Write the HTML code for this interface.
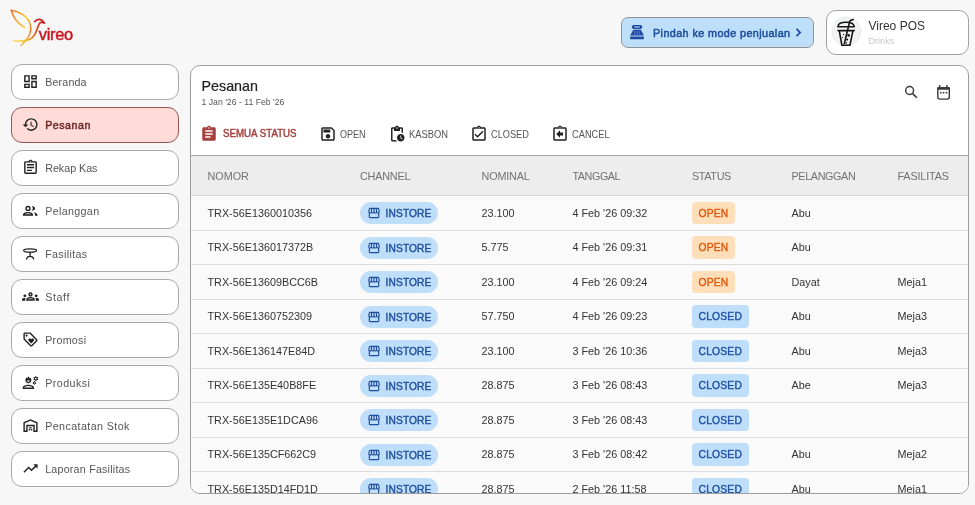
<!DOCTYPE html>
<html><head><meta charset="utf-8">
<style>
*{box-sizing:border-box;margin:0;padding:0}
html,body{-webkit-font-smoothing:antialiased;width:975px;height:505px;overflow:hidden;background:#f7f7f7;font-family:"Liberation Sans",sans-serif;color:#333}
.a{position:absolute}
.t{position:absolute;white-space:nowrap;line-height:1}
svg{position:absolute;display:block}
.nav{position:absolute;left:11px;width:168px;height:36px;border:1px solid #a9a9a9;border-radius:11px;background:#fff}
.nav.act{background:#ffdcd7;border-color:#955656}
.nl{position:absolute;left:33.2px;top:11.8px;font-size:10.7px;color:#555;line-height:1;white-space:nowrap}
.nav.act .nl{color:#6b2727;font-size:10.7px;-webkit-text-stroke:0.45px #6b2727}
.ni{left:9.8px;top:8.2px;width:17px;height:17px}
.card{position:absolute;left:190px;top:65px;width:779px;height:429px;border:1px solid #9d9d9d;border-radius:10px;background:#fff;overflow:hidden}
.hdr{position:absolute;left:0;top:89px;width:777px;height:41px;background:#ededed;border-top:1px solid #a4a4a4;border-bottom:1px solid #d6d6d6}
.th{position:absolute;top:15.3px;font-size:10.8px;color:#727272;line-height:1;white-space:nowrap}
.row{position:absolute;left:0;width:777px;height:34.5px;background:#fafafa;border-bottom:1px solid #dcdcdc}
.td{position:absolute;top:11.9px;font-size:10.8px;color:#333;line-height:1;white-space:nowrap}
.chip{position:absolute;left:169px;top:6px;width:78px;height:22px;border-radius:11px;background:#bedef9}
.chip .cl{position:absolute;left:25.6px;top:7.2px;letter-spacing:0.1px;font-size:10.2px;color:#1f4f9e;line-height:1;-webkit-text-stroke:0.4px #1f4f9e}
.chip svg{left:7px;top:4px;width:14px;height:14px}
.st{position:absolute;left:500.5px;top:5.6px;height:22.5px;border-radius:4px;font-size:10.3px;letter-spacing:0.2px;line-height:1;padding:7.4px 7px 0 7px;white-space:nowrap;-webkit-text-stroke:0.35px currentColor}
.st.o{background:#ffdfb9;color:#e2560c}
.st.c{background:#bedef9;color:#1d4fa3}
.tab{position:absolute;top:59px;height:18px}
.tab svg{left:0;top:0;width:18px;height:18px}
.tab .tl{position:absolute;left:20px;top:4.5px;font-size:10px;color:#555;line-height:1;white-space:nowrap}
</style></head><body><div id="root" style="position:absolute;left:0;top:0;width:975px;height:505px;will-change:transform">

<!-- logo -->
<svg class="a" style="left:0;top:0" width="90" height="55" viewBox="0 0 90 55">
<defs>
<linearGradient id="lg1" gradientUnits="userSpaceOnUse" x1="11" y1="10" x2="24" y2="46">
<stop offset="0" stop-color="#f06a22"/><stop offset="0.32" stop-color="#f7d21e"/><stop offset="0.68" stop-color="#e6701e"/><stop offset="1" stop-color="#f3c23a"/>
</linearGradient>
<linearGradient id="lg3" gradientUnits="userSpaceOnUse" x1="11" y1="10" x2="24" y2="28">
<stop offset="0" stop-color="#f06a22"/><stop offset="1" stop-color="#f7c21e"/>
</linearGradient>
<linearGradient id="lg2" gradientUnits="userSpaceOnUse" x1="13" y1="41" x2="42" y2="22">
<stop offset="0" stop-color="#fbe28a"/><stop offset="0.3" stop-color="#f5c52a"/><stop offset="0.6" stop-color="#e8651c"/><stop offset="1" stop-color="#c81e22"/>
</linearGradient>
</defs>
<path d="M11.2 10.3 C19 11.5 28 16 30.3 24.5 C31.8 31 29 37 25.5 40.8 C24 42.6 22.5 44.3 21 45.5" fill="none" stroke="url(#lg1)" stroke-width="1.45" stroke-linecap="round"/>
<path d="M11.2 10.3 C13 17 17 23 24.5 27.5" fill="none" stroke="url(#lg3)" stroke-width="1.35" stroke-linecap="round"/>
<path d="M13.5 40.6 C20 41.6 27 41 31.5 38.3 C35 35.8 36.6 31 37.6 27.8 C38.5 24.8 39.6 22.6 41.2 22.2 L44.2 23" fill="none" stroke="url(#lg2)" stroke-width="1.7" stroke-linecap="round"/>
<path d="M34.8 21.6 C36 20 37.5 19.2 39.5 19.4 C41.5 19.6 43 21 44.2 22.8" fill="none" stroke="#c81e22" stroke-width="1.7" stroke-linecap="round"/>
</svg>
<div class="t" style="left:38.8px;top:25.6px;font-size:16.4px;letter-spacing:-0.3px;color:#c8161f;-webkit-text-stroke:0.45px #c8161f">vireo</div>

<!-- top right button -->
<div class="a" style="left:621px;top:16.5px;width:193px;height:31px;border:1px solid #939393;border-radius:7px;background:#bedff9"></div>
<svg style="left:624px;top:20px;width:26px;height:24px" viewBox="0 0 26 24">
<path fill="#1f4aa0" fill-rule="evenodd" d="M9.8 5H16.3A2 2 0 0 1 18.3 7A2 2 0 0 1 16.3 9H9.8A2 2 0 0 1 7.8 7A2 2 0 0 1 9.8 5ZM10.1 6.5V7.6H16V6.5Z"/>
<path fill="#1f4aa0" d="M9.3 9.8H16.9L19.8 15.6H6.2Z"/>
<path fill="#5f86c8" d="M10.2 11h1v3.7h-1zM12.9 11h.9v3.7h-.9zM15.2 11h.7v3.7h-.7z"/>
<rect x="6.1" y="15.6" width="13.8" height="1.4" fill="#7397d2"/>
<rect x="6" y="17" width="14" height="2.3" rx="0.8" fill="#1f4aa0"/>
</svg>
<div class="t" style="left:653px;top:27.5px;font-size:10.8px;letter-spacing:0.4px;color:#1f4f9e;-webkit-text-stroke:0.5px #1f4f9e">Pindah ke mode penjualan</div>
<svg style="left:790px;top:23.6px;width:17px;height:17px" viewBox="0 0 24 24"><path fill="#1f4aa0" d="M10 6L8.3 7.7 12.6 12l-4.3 4.3L10 18l6-6z"/></svg>

<!-- store card -->
<div class="a" style="left:825.5px;top:10px;width:143px;height:44.5px;border:1px solid #a0a0a0;border-radius:10px;background:#fff"></div>
<svg style="left:826px;top:12px;width:40px;height:40px" viewBox="0 0 40 40">
<circle cx="20.4" cy="19.4" r="14.4" fill="#f3f3f3" stroke="#dae6da" stroke-width="0.7"/>
<g fill="none" stroke="#151515" stroke-width="1.6" stroke-linejoin="round" stroke-linecap="round">
<path d="M12 14.7C12 11.6 15 10.3 20 10.3S28 11.6 28.2 14.7M11.8 14.7H28.3M12 18.6H28.2M13.3 18.8L15.9 33.3H23.9L26.9 18.8"/>
<path d="M18.3 31.6L23.9 8.8L27.2 7.6"/>
</g>
<g fill="#151515"><circle cx="22.6" cy="23.4" r="1.3"/><circle cx="21.1" cy="27.6" r="1.05"/><circle cx="20.2" cy="30.9" r="0.8"/><circle cx="17.5" cy="22.6" r="0.7"/><circle cx="16.5" cy="25.5" r="0.6"/></g>
</svg>
<div class="t" style="left:868.5px;top:20px;font-size:12px;color:#333">Vireo POS</div>
<div class="t" style="left:868.5px;top:36.7px;font-size:9.1px;color:#c9c9c9">Drinks</div>

<!-- sidebar -->
<div class="nav" style="top:64px"><svg class="ni" viewBox="0 0 24 24"><path fill="#222" d="M19 5v2h-4V5h4M9 5v6H5V5h4m10 8v6h-4v-6h4M9 17v2H5v-2h4M21 3h-8v6h8V3zM11 3H3v10h8V3zm10 8h-8v10h8V11zm-10 4H3v6h8v-6z"/></svg><div class="nl" style="letter-spacing:0.16px">Beranda</div></div>
<div class="nav act" style="top:107px"><svg class="ni" viewBox="0 0 24 24"><path fill="#222" d="M13 3c-4.97 0-9 4.03-9 9H1l3.89 3.89.07.14L9 12H6c0-3.870 3.13-7 7-7s7 3.13 7 7-3.13 7-7 7c-1.93 0-3.68-.79-4.94-2.06l-1.42 1.42C8.27 19.99 10.51 21 13 21c4.97 0 9-4.030 9-9s-4.03-9-9-9zm-1 5v5l4.28 2.54.72-1.21-3.5-2.080V8H12z"/></svg><div class="nl" style="letter-spacing:0.5px">Pesanan</div></div>
<div class="nav" style="top:150px"><svg class="ni" viewBox="0 0 24 24"><path fill="#222" d="M7 15h7v2H7zm0-4h10v2H7zm0-4h10v2H7zm12-4h-4.18C14.4 1.84 13.3 1 12 1c-1.3 0-2.4.84-2.82 2H5c-1.1 0-2 .9-2 2v14c0 1.1.9 2 2 2h14c1.1 0 2-.9 2-2V5c0-1.1-.9-2-2-2zm-7-.25c.41 0 .75.34.75.75s-.34.75-.75.75-.75-.34-.75-.75.34-.75.75-.75zM19 19H5V5h14v14z"/></svg><div class="nl" style="letter-spacing:0px">Rekap Kas</div></div>
<div class="nav" style="top:193px"><svg style="left:6px;top:6px;width:24px;height:24px" viewBox="0 0 24 24"><g fill="none" stroke="#1a1a1a" stroke-width="1.35"><circle cx="10" cy="8.4" r="1.95"/><path d="M5.4 15C5.8 13.5 7.6 12.6 10 12.6S14.2 13.5 14.6 15Z" stroke-linejoin="round"/></g><path fill="#1a1a1a" d="M13.4 5.9C15.6 5.9 17.1 7 17.1 8.3S15.6 10.7 13.4 10.7C14.4 10 14.9 9.2 14.9 8.3S14.4 6.6 13.4 5.9Z M16 12.3C18.1 12.8 19.5 14 19.6 15.7H17.2C17.1 14.3 16.7 13.2 16 12.3Z"/></svg><div class="nl" style="letter-spacing:0.35px">Pelanggan</div></div>
<div class="nav" style="top:236px"><svg style="left:6px;top:6px;width:24px;height:24px" viewBox="0 0 24 24"><g fill="none" stroke="#1a1a1a" stroke-width="1.3"><ellipse cx="12.1" cy="7.5" rx="6.45" ry="1.7"/><path d="M12.1 9.2V13.3M8.6 16.5C8.6 14.5 10.1 13.3 12.1 13.3S15.6 14.5 15.6 16.5"/></g></svg><div class="nl" style="letter-spacing:0.35px">Fasilitas</div></div>
<div class="nav" style="top:279px"><svg class="ni" viewBox="0 0 24 24"><path fill="#222" d="M4,13c1.1,0,2-0.9,2-2c0-1.1-0.9-2-2-2s-2,0.9-2,2C2,12.1,2.9,13,4,13z M5.13,14.1C4.76,14.04,4.39,14,4,14 c-0.99,0-1.93,0.21-2.78,0.58C0.48,14.9,0,15.62,0,16.43V18l4.5,0v-1.61C4.5,15.560,4.73,14.78,5.13,14.1z M20,13c1.1,0,2-0.9,2-2 c0-1.1-0.9-2-2-2s-2,0.9-2,2C18,12.1,18.9,13,20,13z M24,16.43c0-0.81-0.48-1.53-1.22-1.85C21.93,14.21,20.99,14,20,14 c-0.39,0-0.76,0.04-1.13,0.1c0.4,0.68,0.63,1.46,0.63,2.29V18l4.5,0V16.43z M16.24,13.65c-1.17-0.52-2.61-0.9-4.24-0.9 c-1.63,0-3.07,0.39-4.24,0.9C6.68,14.13,6,15.21,6,16.39V18h12v-1.61C18,15.21,17.32,14.13,16.24,13.65z M8.07,16 c0.09-0.23,0.13-0.39,0.91-0.69c0.97-0.38,1.99-0.56,3.02-0.56s2.05,0.18,3.02,0.56c0.77,0.3,0.81,0.46,0.91,0.69H8.07z M12,8 c0.55,0,1,0.45,1,1s-0.45,1-1,1s-1-0.45-1-1S11.45,8,12,8 M12,6c-1.66,0-3,1.34-3,3c0,1.66,1.34,3,3,3s3-1.34,3-3 C15,7.34,13.66,6,12,6L12,6z"/></svg><div class="nl" style="letter-spacing:0.6px">Staff</div></div>
<div class="nav" style="top:322px"><svg class="ni" viewBox="0 0 24 24"><path fill="#222" d="M21.41 11.58l-9-9C12.05 2.22 11.55 2 11 2H4c-1.1 0-2 .9-2 2v7c0 .55.22 1.05.59 1.42l9 9c.36.36.86.58 1.41.58s1.05-.22 1.41-.59l7-7c.37-.36.59-.86.59-1.41s-.23-1.06-.59-1.42zM13 20.01L4 11V4h7v-.01l9 9-7 7.02zM6.5 5A1.5 1.5 0 1 0 6.5 8A1.5 1.5 0 1 0 6.5 5zM8.9 12.55c0 .57.23 1.07.6 1.45l3.5 3.5 3.5-3.5c.37-.37.6-.89.6-1.45 0-1.13-.92-2.05-2.05-2.05-.57 0-1.08.23-1.450.6l-.6.6-.6-.59c-.37-.38-.89-.61-1.45-.61-1.13 0-2.05.92-2.05 2.05z"/></svg><div class="nl" style="letter-spacing:0.28px">Promosi</div></div>
<div class="nav" style="top:365px"><svg class="ni" viewBox="0 0 24 24"><path fill="#222" d="M9 15c-2.67 0-8 1.34-8 4v2h16v-2c0-2.66-5.33-4-8-4zm-6 4c.22-.72 3.31-2 6-2 2.7 0 5.8 1.29 6 2H3zM4.74 9H5c0 2.21 1.79 4 4 4s4-1.79 4-4h.26c.27 0 .49-.22.49-.49v-.02c0-.27-.22-.49-.49-.49H13c0-1.48-.81-2.75-2-3.45v.95c0 .28-.22.5-.5.5s-.5-.22-.5-.5V4.14C9.68 4.06 9.35 4 9 4s-.68.06-1 .14V5.5c0 .28-.22.5-.5.5S7 5.78 7 5.5v-.95C5.81 5.25 5 6.52 5 8h-.26c-.27 0-.49.22-.49.49v.03c0 .26.22.48.49.48zM11 9c0 1.1-.9 2-2 2s-2-.9-2-2h4zM21.98 6.23l.93-.83-.75-1.3-1.19.39c-.14-.11-.3-.2-.47-.27L20.25 3h-1.5l-.25 1.22c-.17.07-.33.16-.48.27l-1.18-.39-.75 1.3.93.83c-.02.17-.02.35 0 .52l-.93.85.75 1.3 1.2-.38c.13.1.28.18.43.25l.28 1.23h1.5l.27-1.22c.16-.07.3-.15.44-.25l1.19.38.75-1.3-.93-.85c.03-.19.02-.36.01-.53zM19.5 7.75c-.69 0-1.25-.56-1.25-1.25s.56-1.25 1.25-1.25 1.25.56 1.25 1.25-.56 1.25-1.250 1.25zM19.4 10.79l-.85.28c-.1-.08-.21-.14-.33-.19l-.18-.88h-1.07l-.18.87c-.12.05-.24.12-.34.19l-.84-.28-.54.93.66.59c-.01.13-.01.25 0 .37l-.66.61.54.93.86-.27c.1.07.2.13.31.18l.18.88h1.07l.19-.87c.11-.05.22-.11.32-.18l.85.27.54-.93-.66-.61c.01-.13.01-.25 0-.37l.66-.59-.53-.93zM17.75 13.3c-.48 0-.87-.39-.87-.87s.39-.87.87-.87.87.39.87.87-.39.87-.87.87z"/></svg><div class="nl" style="letter-spacing:0.44px">Produksi</div></div>
<div class="nav" style="top:408px"><svg class="ni" viewBox="0 0 24 24"><path fill="#222" fill-rule="evenodd" d="M2 21V7.5L12 3.2 22 7.5V21h-6v-8H8v8zM4 19h2v-8h12v8h2V8.8L12 5.4 4 8.8zM9.5 17h2v2h-2zM12.5 17h2v2h-2zM10 14.5h3.5v1.7H10z"/></svg><div class="nl" style="letter-spacing:0.41px">Pencatatan Stok</div></div>
<div class="nav" style="top:451px"><svg class="ni" viewBox="0 0 24 24"><path fill="#222" d="M16 6l2.29 2.29-4.88 4.88-4-4L2 16.59 3.41 18l6-6 4 4 6.3-6.29L22 12V6z"/></svg><div class="nl" style="letter-spacing:0.22px">Laporan Fasilitas</div></div>

<!-- main card -->
<div class="card">
  <div class="t" style="left:10.5px;top:13px;font-size:14.3px;color:#222;-webkit-text-stroke:0.2px #222">Pesanan</div>
  <div class="t" style="left:10.5px;top:32px;font-size:8.7px;color:#555">1 Jan '26 - 11 Feb '26</div>
  <svg style="left:709px;top:14px;width:25px;height:25px" viewBox="0 0 25 25"><g fill="none" stroke="#3a3a3a" stroke-width="1.45"><circle cx="9.6" cy="10.5" r="3.95"/><path d="M12.4 13.4L16.8 17.8" stroke-width="1.6"/></g></svg>
  <svg style="left:739px;top:14px;width:25px;height:25px" viewBox="0 0 25 25"><rect x="7.8" y="7.6" width="11.5" height="11.5" rx="2" fill="none" stroke="#3a3a3a" stroke-width="1.4"/><rect x="7.1" y="6.9" width="12.9" height="2.8" rx="1" fill="#3a3a3a"/><rect x="8.9" y="5" width="1.4" height="2.6" fill="#3a3a3a"/><rect x="16.2" y="5" width="1.4" height="2.6" fill="#3a3a3a"/><g fill="#3a3a3a"><circle cx="10.8" cy="12.7" r="0.9"/><circle cx="13.6" cy="12.7" r="0.9"/><circle cx="16.5" cy="12.7" r="0.9"/></g></svg>

  <div class="tab" style="left:9px"><svg viewBox="0 0 24 24"><path fill="#a5403c" d="M19 3h-4.18C14.4 1.84 13.3 1 12 1c-1.3 0-2.4.84-2.82 2H5c-1.1 0-2 .9-2 2v14c0 1.1.9 2 2 2h14c1.1 0 2-.9 2-2V5c0-1.1-.9-2-2-2zm-7 0c.55 0 1 .45 1 1s-.45 1-1 1-1-.45-1-1 .45-1 1-1zm2 14H7v-2h7v2zm3-4H7v-2h10v2zm0-4H7V7h10v2z"/></svg><div class="tl" style="left:22.5px;top:4.2px;font-size:10.4px;transform:scaleX(0.935);transform-origin:0 0;color:#a5403c;-webkit-text-stroke:0.45px #a5403c">SEMUA STATUS</div></div>
  <div class="tab" style="left:128px"><svg viewBox="0 0 24 24"><path fill="#222" d="M17 3H5c-1.11 0-2 .9-2 2v14c0 1.1.89 2 2 2h14c1.1 0 2-.9 2-2V7l-4-4zm2 16H5V5h11.17L19 7.83V19zm-7-7c-1.66 0-3 1.34-3 3s1.34 3 3 3 3-1.34 3-3-1.34-3-3-3zM6 6h9v4H6z"/></svg><div class="tl" style="transform:scaleX(0.905);transform-origin:0 0;left:21px">OPEN</div></div>
  <div class="tab" style="left:197px"><svg viewBox="0 0 24 24"><path fill="#222" d="M17 12c-2.76 0-5 2.24-5 5s2.24 5 5 5 5-2.24 5-5-2.24-5-5-5zm1.65 7.35L16.5 17.2V14h1v2.79l1.85 1.85-.7.71zM18 3h-3.18C14.4 1.84 13.3 1 12 1s-2.4.84-2.82 2H6c-1.1 0-2 .9-2 2v15c0 1.1.9 2 2 2h6.11c-.59-.57-1.07-1.25-1.42-2H6V5h2v3h8V5h2v5.08c.71.1 1.38.31 2 .6V5c0-1.1-.9-2-2-2zm-6 2c-.55 0-1-.45-1-1s.45-1 1-1 1 .45 1 1-.45 1-1 1z"/></svg><div class="tl" style="transform:scaleX(0.935);transform-origin:0 0;left:21px">KASBON</div></div>
  <div class="tab" style="left:279px"><svg viewBox="0 0 24 24"><path fill="#222" d="M18 9l-1.41-1.42L10 14.17l-2.59-2.58L6 13l4 4zm1-6h-4.18C14.4 1.84 13.3 1 12 1c-1.3 0-2.4.84-2.82 2H5c-1.1 0-2 .9-2 2v14c0 1.1.9 2 2 2h14c1.1 0 2-.9 2-2V5c0-1.1-.9-2-2-2zm-7-.25c.41 0 .75.34.75.75s-.34.75-.75.75-.75-.34-.75-.75.34-.75.75-.75zM19 19H5V5h14v14z"/></svg><div class="tl" style="transform:scaleX(0.92);transform-origin:0 0;left:21px">CLOSED</div></div>
  <div class="tab" style="left:360px"><svg viewBox="0 0 24 24"><path fill="#222" d="M19 3h-4.18C14.4 1.84 13.3 1 12 1c-1.3 0-2.4.84-2.82 2H5c-1.1 0-2 .9-2 2v14c0 1.1.9 2 2 2h14c1.1 0 2-.9 2-2V5c0-1.1-.9-2-2-2zm-7-.25c.41 0 .75.34.75.75s-.34.75-.75.75-.75-.34-.75-.75.34-.75.75-.75zM19 19H5V5h14v14zm-7-2v-3h4v-4h-4V7l-5 5z"/></svg><div class="tl" style="transform:scaleX(0.927);transform-origin:0 0;left:21px">CANCEL</div></div>

  <div class="hdr">
    <div class="th" style="left:16.5px">NOMOR</div>
    <div class="th" style="left:169px;letter-spacing:-0.2px">CHANNEL</div>
    <div class="th" style="left:290.5px;letter-spacing:-0.15px">NOMINAL</div>
    <div class="th" style="left:381.5px;letter-spacing:-0.45px">TANGGAL</div>
    <div class="th" style="left:501px;letter-spacing:-0.34px">STATUS</div>
    <div class="th" style="left:600.5px;letter-spacing:-0.37px">PELANGGAN</div>
    <div class="th" style="left:706.5px;letter-spacing:-0.14px">FASILITAS</div>
  </div>
  <!--ROWS--><div class="row" style="top:130.0px"><div class="td" style="left:16.5px">TRX-56E1360010356</div><div class="chip"><svg viewBox="0 0 24 24"><path fill="#1f4f9e" d="M21.9 8.89l-1.05-4.37c-.22-.9-1-1.52-1.91-1.52H5.05c-.9 0-1.69.63-1.9 1.52L2.1 8.89c-.24 1.02-.02 2.06.62 2.88.08.11.19.19.28.29V19c0 1.1.9 2 2 2h14c1.1 0 2-.9 2-2v-6.94c.09-.09.2-.18.28-.28.64-.82.87-1.87.62-2.89zm-2.99-3.9l1.05 4.37c.1.42.01.84-.25 1.17-.14.18-.44.47-.94.47-.61 0-1.14-.49-1.210-1.14L16.98 5l1.93-.01zM13 5h1.96l.54 4.52c.05.39-.07.78-.33 1.07-.22.26-.54.41-.95.41-.67 0-1.22-.59-1.22-1.31V5zM8.49 9.52L9.04 5H11v4.69c0 .72-.55 1.31-1.29 1.31-.34 0-.65-.15-.89-.41-.25-.29-.37-.68-.33-1.07zm-4.45-.16L5.05 5h1.97l-.58 4.86c-.08.65-.6 1.14-1.21 1.14-.49 0-.8-.29-.93-.47-.27-.32-.36-.75-.26-1.17zM5 19v-6.03c.08.01.15.03.23.03.87 0 1.66-.36 2.24-.95.6.6 1.4.95 2.31.95.87 0 1.65-.36 2.23-.93.59.57 1.39.93 2.29.93.84 0 1.64-.35 2.24-.95.58.59 1.37.95 2.24.95.08 0 .15-.02.23-.03V19H5z"/></svg><div class="cl">INSTORE</div></div><div class="td" style="left:290.5px">23.100</div><div class="td" style="left:381.5px">4 Feb '26 09:32</div><div class="st o">OPEN</div><div class="td" style="left:600.5px">Abu</div><div class="td" style="left:706.5px"></div></div>
<div class="row" style="top:164.5px"><div class="td" style="left:16.5px">TRX-56E136017372B</div><div class="chip"><svg viewBox="0 0 24 24"><path fill="#1f4f9e" d="M21.9 8.89l-1.05-4.37c-.22-.9-1-1.52-1.91-1.52H5.05c-.9 0-1.69.63-1.9 1.52L2.1 8.89c-.24 1.02-.02 2.06.62 2.88.08.11.19.19.28.29V19c0 1.1.9 2 2 2h14c1.1 0 2-.9 2-2v-6.94c.09-.09.2-.18.28-.28.64-.82.87-1.87.62-2.89zm-2.99-3.9l1.05 4.37c.1.42.01.84-.25 1.17-.14.18-.44.47-.94.47-.61 0-1.14-.49-1.210-1.14L16.98 5l1.93-.01zM13 5h1.96l.54 4.52c.05.39-.07.78-.33 1.07-.22.26-.54.41-.95.41-.67 0-1.22-.59-1.22-1.31V5zM8.49 9.52L9.04 5H11v4.69c0 .72-.55 1.31-1.29 1.31-.34 0-.65-.15-.89-.41-.25-.29-.37-.68-.33-1.07zm-4.45-.16L5.05 5h1.97l-.58 4.86c-.08.65-.6 1.14-1.21 1.14-.49 0-.8-.29-.93-.47-.27-.32-.36-.75-.26-1.17zM5 19v-6.03c.08.01.15.03.23.03.87 0 1.66-.36 2.24-.95.6.6 1.4.95 2.31.95.87 0 1.65-.36 2.23-.93.59.57 1.39.93 2.29.93.84 0 1.64-.35 2.24-.95.58.59 1.37.95 2.24.95.08 0 .15-.02.23-.03V19H5z"/></svg><div class="cl">INSTORE</div></div><div class="td" style="left:290.5px">5.775</div><div class="td" style="left:381.5px">4 Feb '26 09:31</div><div class="st o">OPEN</div><div class="td" style="left:600.5px">Abu</div><div class="td" style="left:706.5px"></div></div>
<div class="row" style="top:199.0px"><div class="td" style="left:16.5px">TRX-56E13609BCC6B</div><div class="chip"><svg viewBox="0 0 24 24"><path fill="#1f4f9e" d="M21.9 8.89l-1.05-4.37c-.22-.9-1-1.52-1.91-1.52H5.05c-.9 0-1.69.63-1.9 1.52L2.1 8.89c-.24 1.02-.02 2.06.62 2.88.08.11.19.19.28.29V19c0 1.1.9 2 2 2h14c1.1 0 2-.9 2-2v-6.94c.09-.09.2-.18.28-.28.64-.82.87-1.87.62-2.89zm-2.99-3.9l1.05 4.37c.1.42.01.84-.25 1.17-.14.18-.44.47-.94.47-.61 0-1.14-.49-1.210-1.14L16.98 5l1.93-.01zM13 5h1.96l.54 4.52c.05.39-.07.78-.33 1.07-.22.26-.54.41-.95.41-.67 0-1.22-.59-1.22-1.31V5zM8.49 9.52L9.04 5H11v4.69c0 .72-.55 1.31-1.29 1.31-.34 0-.65-.15-.89-.41-.25-.29-.37-.68-.33-1.07zm-4.45-.16L5.05 5h1.97l-.58 4.86c-.08.65-.6 1.14-1.21 1.14-.49 0-.8-.29-.93-.47-.27-.32-.36-.75-.26-1.17zM5 19v-6.03c.08.01.15.03.23.03.87 0 1.66-.36 2.24-.95.6.6 1.4.95 2.31.95.87 0 1.65-.36 2.23-.93.59.57 1.39.93 2.29.93.84 0 1.64-.35 2.24-.95.58.59 1.37.95 2.24.95.08 0 .15-.02.23-.03V19H5z"/></svg><div class="cl">INSTORE</div></div><div class="td" style="left:290.5px">23.100</div><div class="td" style="left:381.5px">4 Feb '26 09:24</div><div class="st o">OPEN</div><div class="td" style="left:600.5px">Dayat</div><div class="td" style="left:706.5px">Meja1</div></div>
<div class="row" style="top:233.5px"><div class="td" style="left:16.5px">TRX-56E1360752309</div><div class="chip"><svg viewBox="0 0 24 24"><path fill="#1f4f9e" d="M21.9 8.89l-1.05-4.37c-.22-.9-1-1.52-1.91-1.52H5.05c-.9 0-1.69.63-1.9 1.52L2.1 8.89c-.24 1.02-.02 2.06.62 2.88.08.11.19.19.28.29V19c0 1.1.9 2 2 2h14c1.1 0 2-.9 2-2v-6.94c.09-.09.2-.18.28-.28.64-.82.87-1.87.62-2.89zm-2.99-3.9l1.05 4.37c.1.42.01.84-.25 1.17-.14.18-.44.47-.94.47-.61 0-1.14-.49-1.210-1.14L16.98 5l1.93-.01zM13 5h1.96l.54 4.52c.05.39-.07.78-.33 1.07-.22.26-.54.41-.95.41-.67 0-1.22-.59-1.22-1.31V5zM8.49 9.52L9.04 5H11v4.69c0 .72-.55 1.31-1.29 1.31-.34 0-.65-.15-.89-.41-.25-.29-.37-.68-.33-1.07zm-4.45-.16L5.05 5h1.97l-.58 4.86c-.08.65-.6 1.14-1.21 1.14-.49 0-.8-.29-.93-.47-.27-.32-.36-.75-.26-1.17zM5 19v-6.03c.08.01.15.03.23.03.87 0 1.66-.36 2.24-.95.6.6 1.4.95 2.31.95.87 0 1.65-.36 2.23-.93.59.57 1.39.93 2.29.93.84 0 1.64-.35 2.24-.95.58.59 1.37.95 2.24.95.08 0 .15-.02.23-.03V19H5z"/></svg><div class="cl">INSTORE</div></div><div class="td" style="left:290.5px">57.750</div><div class="td" style="left:381.5px">4 Feb '26 09:23</div><div class="st c">CLOSED</div><div class="td" style="left:600.5px">Abu</div><div class="td" style="left:706.5px">Meja3</div></div>
<div class="row" style="top:268.0px"><div class="td" style="left:16.5px">TRX-56E136147E84D</div><div class="chip"><svg viewBox="0 0 24 24"><path fill="#1f4f9e" d="M21.9 8.89l-1.05-4.37c-.22-.9-1-1.52-1.91-1.52H5.05c-.9 0-1.69.63-1.9 1.52L2.1 8.89c-.24 1.02-.02 2.06.62 2.88.08.11.19.19.28.29V19c0 1.1.9 2 2 2h14c1.1 0 2-.9 2-2v-6.94c.09-.09.2-.18.28-.28.64-.82.87-1.87.62-2.89zm-2.99-3.9l1.05 4.37c.1.42.01.84-.25 1.17-.14.18-.44.47-.94.47-.61 0-1.14-.49-1.210-1.14L16.98 5l1.93-.01zM13 5h1.96l.54 4.52c.05.39-.07.78-.33 1.07-.22.26-.54.41-.95.41-.67 0-1.22-.59-1.22-1.31V5zM8.49 9.52L9.04 5H11v4.69c0 .72-.55 1.31-1.29 1.31-.34 0-.65-.15-.89-.41-.25-.29-.37-.68-.33-1.07zm-4.45-.16L5.05 5h1.97l-.58 4.86c-.08.65-.6 1.14-1.21 1.14-.49 0-.8-.29-.93-.47-.27-.32-.36-.75-.26-1.17zM5 19v-6.03c.08.01.15.03.23.03.87 0 1.66-.36 2.24-.95.6.6 1.4.95 2.31.95.87 0 1.65-.36 2.23-.93.59.57 1.39.93 2.29.93.84 0 1.64-.35 2.24-.95.58.59 1.37.95 2.24.95.08 0 .15-.02.23-.03V19H5z"/></svg><div class="cl">INSTORE</div></div><div class="td" style="left:290.5px">23.100</div><div class="td" style="left:381.5px">3 Feb '26 10:36</div><div class="st c">CLOSED</div><div class="td" style="left:600.5px">Abu</div><div class="td" style="left:706.5px">Meja3</div></div>
<div class="row" style="top:302.5px"><div class="td" style="left:16.5px">TRX-56E135E40B8FE</div><div class="chip"><svg viewBox="0 0 24 24"><path fill="#1f4f9e" d="M21.9 8.89l-1.05-4.37c-.22-.9-1-1.52-1.91-1.52H5.05c-.9 0-1.69.63-1.9 1.52L2.1 8.89c-.24 1.02-.02 2.06.62 2.88.08.11.19.19.28.29V19c0 1.1.9 2 2 2h14c1.1 0 2-.9 2-2v-6.94c.09-.09.2-.18.28-.28.64-.82.87-1.87.62-2.89zm-2.99-3.9l1.05 4.37c.1.42.01.84-.25 1.17-.14.18-.44.47-.94.47-.61 0-1.14-.49-1.210-1.14L16.98 5l1.93-.01zM13 5h1.96l.54 4.52c.05.39-.07.78-.33 1.07-.22.26-.54.41-.95.41-.67 0-1.22-.59-1.22-1.31V5zM8.49 9.52L9.04 5H11v4.69c0 .72-.55 1.31-1.29 1.31-.34 0-.65-.15-.89-.41-.25-.29-.37-.68-.33-1.07zm-4.45-.16L5.05 5h1.97l-.58 4.86c-.08.65-.6 1.14-1.21 1.14-.49 0-.8-.29-.93-.47-.27-.32-.36-.75-.26-1.17zM5 19v-6.03c.08.01.15.03.23.03.87 0 1.66-.36 2.24-.95.6.6 1.4.95 2.31.95.87 0 1.65-.36 2.23-.93.59.57 1.39.93 2.29.93.84 0 1.64-.35 2.24-.95.58.59 1.37.95 2.24.95.08 0 .15-.02.23-.03V19H5z"/></svg><div class="cl">INSTORE</div></div><div class="td" style="left:290.5px">28.875</div><div class="td" style="left:381.5px">3 Feb '26 08:43</div><div class="st c">CLOSED</div><div class="td" style="left:600.5px">Abe</div><div class="td" style="left:706.5px">Meja3</div></div>
<div class="row" style="top:337.0px"><div class="td" style="left:16.5px">TRX-56E135E1DCA96</div><div class="chip"><svg viewBox="0 0 24 24"><path fill="#1f4f9e" d="M21.9 8.89l-1.05-4.37c-.22-.9-1-1.52-1.91-1.52H5.05c-.9 0-1.69.63-1.9 1.52L2.1 8.89c-.24 1.02-.02 2.06.62 2.88.08.11.19.19.28.29V19c0 1.1.9 2 2 2h14c1.1 0 2-.9 2-2v-6.94c.09-.09.2-.18.28-.28.64-.82.87-1.87.62-2.89zm-2.99-3.9l1.05 4.37c.1.42.01.84-.25 1.17-.14.18-.44.47-.94.47-.61 0-1.14-.49-1.210-1.14L16.98 5l1.93-.01zM13 5h1.96l.54 4.52c.05.39-.07.78-.33 1.07-.22.26-.54.41-.95.41-.67 0-1.22-.59-1.22-1.31V5zM8.49 9.52L9.04 5H11v4.69c0 .72-.55 1.31-1.29 1.31-.34 0-.65-.15-.89-.41-.25-.29-.37-.68-.33-1.07zm-4.45-.16L5.05 5h1.97l-.58 4.86c-.08.65-.6 1.14-1.21 1.14-.49 0-.8-.29-.93-.47-.27-.32-.36-.75-.26-1.17zM5 19v-6.03c.08.01.15.03.23.03.87 0 1.66-.36 2.24-.95.6.6 1.4.95 2.31.95.87 0 1.65-.36 2.23-.93.59.57 1.39.93 2.29.93.84 0 1.64-.35 2.24-.95.58.59 1.37.95 2.24.95.08 0 .15-.02.23-.03V19H5z"/></svg><div class="cl">INSTORE</div></div><div class="td" style="left:290.5px">28.875</div><div class="td" style="left:381.5px">3 Feb '26 08:43</div><div class="st c">CLOSED</div><div class="td" style="left:600.5px"></div><div class="td" style="left:706.5px"></div></div>
<div class="row" style="top:371.5px"><div class="td" style="left:16.5px">TRX-56E135CF662C9</div><div class="chip"><svg viewBox="0 0 24 24"><path fill="#1f4f9e" d="M21.9 8.89l-1.05-4.37c-.22-.9-1-1.52-1.91-1.52H5.05c-.9 0-1.69.63-1.9 1.52L2.1 8.89c-.24 1.02-.02 2.06.62 2.88.08.11.19.19.28.29V19c0 1.1.9 2 2 2h14c1.1 0 2-.9 2-2v-6.94c.09-.09.2-.18.28-.28.64-.82.87-1.87.62-2.89zm-2.99-3.9l1.05 4.37c.1.42.01.84-.25 1.17-.14.18-.44.47-.94.47-.61 0-1.14-.49-1.210-1.14L16.98 5l1.93-.01zM13 5h1.96l.54 4.52c.05.39-.07.78-.33 1.07-.22.26-.54.41-.95.41-.67 0-1.22-.59-1.22-1.31V5zM8.49 9.52L9.04 5H11v4.69c0 .72-.55 1.31-1.29 1.31-.34 0-.65-.15-.89-.41-.25-.29-.37-.68-.33-1.07zm-4.45-.16L5.05 5h1.97l-.58 4.86c-.08.65-.6 1.14-1.21 1.14-.49 0-.8-.29-.93-.47-.27-.32-.36-.75-.26-1.17zM5 19v-6.03c.08.01.15.03.23.03.87 0 1.66-.36 2.24-.95.6.6 1.4.95 2.31.95.87 0 1.65-.36 2.23-.93.59.57 1.39.93 2.29.93.84 0 1.64-.35 2.24-.95.58.59 1.37.95 2.24.95.08 0 .15-.02.23-.03V19H5z"/></svg><div class="cl">INSTORE</div></div><div class="td" style="left:290.5px">28.875</div><div class="td" style="left:381.5px">3 Feb '26 08:42</div><div class="st c">CLOSED</div><div class="td" style="left:600.5px">Abu</div><div class="td" style="left:706.5px">Meja2</div></div>
<div class="row" style="top:406.0px"><div class="td" style="left:16.5px">TRX-56E135D14FD1D</div><div class="chip"><svg viewBox="0 0 24 24"><path fill="#1f4f9e" d="M21.9 8.89l-1.05-4.37c-.22-.9-1-1.52-1.91-1.52H5.05c-.9 0-1.69.63-1.9 1.52L2.1 8.89c-.24 1.02-.02 2.06.62 2.88.08.11.19.19.28.29V19c0 1.1.9 2 2 2h14c1.1 0 2-.9 2-2v-6.94c.09-.09.2-.18.28-.28.64-.82.87-1.87.62-2.89zm-2.99-3.9l1.05 4.37c.1.42.01.84-.25 1.17-.14.18-.44.47-.94.47-.61 0-1.14-.49-1.210-1.14L16.98 5l1.93-.01zM13 5h1.96l.54 4.52c.05.39-.07.78-.33 1.07-.22.26-.54.41-.95.41-.67 0-1.22-.59-1.22-1.31V5zM8.49 9.52L9.04 5H11v4.69c0 .72-.55 1.31-1.29 1.31-.34 0-.65-.15-.89-.41-.25-.29-.37-.68-.33-1.07zm-4.45-.16L5.05 5h1.97l-.58 4.86c-.08.65-.6 1.14-1.21 1.14-.49 0-.8-.29-.93-.47-.27-.32-.36-.75-.26-1.17zM5 19v-6.03c.08.01.15.03.23.03.87 0 1.66-.36 2.24-.95.6.6 1.4.95 2.31.95.87 0 1.65-.36 2.23-.93.59.57 1.39.93 2.29.93.84 0 1.64-.35 2.24-.95.58.59 1.37.95 2.24.95.08 0 .15-.02.23-.03V19H5z"/></svg><div class="cl">INSTORE</div></div><div class="td" style="left:290.5px">28.875</div><div class="td" style="left:381.5px">2 Feb '26 11:58</div><div class="st c">CLOSED</div><div class="td" style="left:600.5px">Abu</div><div class="td" style="left:706.5px">Meja1</div></div><!--/ROWS-->
</div>
</div></body></html>
